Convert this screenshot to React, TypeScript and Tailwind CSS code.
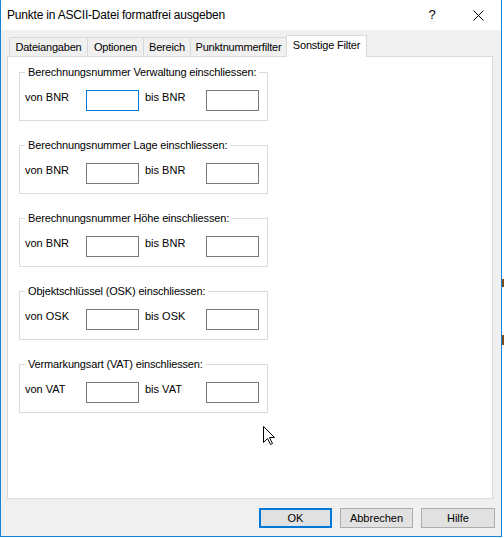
import React from 'react';

const tabs = [
  { label: 'Dateiangaben', width: 'w-[79px]' },
  { label: 'Optionen', width: 'w-[57px]' },
  { label: 'Bereich', width: 'w-[48px]' },
  { label: 'Punktnummerfilter', width: 'w-[97px]' },
];

const groups = [
  { title: 'Berechnungsnummer Verwaltung einschliessen:', from: 'von BNR', to: 'bis BNR', focus: true },
  { title: 'Berechnungsnummer Lage einschliessen:', from: 'von BNR', to: 'bis BNR' },
  { title: 'Berechnungsnummer Höhe einschliessen:', from: 'von BNR', to: 'bis BNR' },
  { title: 'Objektschlüssel (OSK) einschliessen:', from: 'von OSK', to: 'bis OSK' },
  { title: 'Vermarkungsart (VAT) einschliessen:', from: 'von VAT', to: 'bis VAT' },
];

function Field({ focus }: { focus?: boolean }) {
  return (
    <div
      className={`w-[53px] h-[21px] bg-white border ${
        focus ? 'border-[#0078d7]' : 'border-[#7a7a7a]'
      }`}
    />
  );
}

function Group({ title, from, to, focus }: { title: string; from: string; to: string; focus?: boolean }) {
  return (
    <fieldset className="w-[249px] border border-[#dcdcdc] pt-[10px] pb-[9px] pl-[5px]">
      <legend className="px-[3px] leading-[16px] whitespace-nowrap tracking-[-0.15px]">{title}</legend>
      <div className="flex items-start">
        <span className="w-[61px] leading-[14px]">{from}</span>
        <Field focus={focus} />
        <span className="ml-[6px] w-[61px] leading-[14px]">{to}</span>
        <Field />
      </div>
    </fieldset>
  );
}

function Button({ label, primary }: { label: string; primary?: boolean }) {
  return (
    <div
      className={`h-[20px] flex items-center justify-center bg-[#e1e1e1] leading-[16px] ${
        primary ? 'border-2 border-[#0078d7]' : 'border border-[#adadad]'
      } ${label === 'Hilfe' ? 'w-[74px]' : 'w-[73px]'}`}
    >
      {label}
    </div>
  );
}

export default function App() {
  return (
    <div className="relative w-[504px] h-[538px] bg-white flex text-[11px] text-black font-['Liberation_Sans',Arial,sans-serif]">
      <div className="w-[502px] h-[537px] border-l border-r border-b border-[#1883d7] flex flex-col">
        {/* Title bar */}
        <div className="h-[30px] bg-white flex items-center text-[12px] tracking-[-0.2px]">
          <span className="pl-[6px] leading-[16px] flex-1 whitespace-nowrap">Punkte in ASCII-Datei formatfrei ausgeben</span>
          <div className="w-[46px] h-[30px] flex items-center justify-center text-[13px]">?</div>
          <div className="w-[46px] h-[30px] flex items-center justify-center">
            <svg width="11" height="11" viewBox="0 0 11 11">
              <path d="M0.5 0.5 L10.5 10.5 M10.5 0.5 L0.5 10.5" stroke="#000" strokeWidth="1" />
            </svg>
          </div>
        </div>

        {/* Client area */}
        <div className="flex-1 bg-[#f0f0f0] pt-[5px] pl-[6px] flex flex-col">
          <div className="h-[21px] flex items-end pl-[2px] tracking-[-0.2px]">
            {tabs.map((t, i) => (
              <div
                key={t.label}
                className={`${t.width} h-[19px] ${i > 0 ? '-ml-px' : ''} border-l border-t border-r border-[#d9d9d9] bg-[#f0f0f0] text-center pt-[1px] leading-[16px] whitespace-nowrap`}
              >
                {t.label}
              </div>
            ))}
            <div className="relative z-10 -ml-px -mb-px w-[81px] h-[22px] border-l border-t border-r border-[#d9d9d9] bg-white text-center pt-[1px] leading-[16px] whitespace-nowrap">
              Sonstige Filter
            </div>
          </div>

          <div className="w-[486px] h-[443px] border border-[#d9d9d9] bg-white pt-[7px] pl-[11px] flex flex-col gap-[16px]">
            {groups.map((g) => (
              <Group key={g.title} {...g} />
            ))}
          </div>

          <div className="mt-[9px] flex justify-end pr-[6px] gap-[8px]">
            <Button label="OK" primary />
            <Button label="Abbrechen" />
            <Button label="Hilfe" />
          </div>
        </div>
      </div>

      {/* bits of the window behind */}
      <div className="w-[2px] flex flex-col">
        <div className="mt-[279px] h-[8px] bg-[#7a4a1a]" />
        <div className="mt-[48px] h-[10px] bg-[#7a4a1a]" />
      </div>

      {/* mouse pointer */}
      <svg className="absolute left-[263px] top-[426px]" width="13" height="20" viewBox="0 0 13 20">
        <path d="M0.5 0.5 L0.5 16.5 L4.5 12.5 L7.5 18.5 L9.5 17.5 L6.5 11.5 L11.5 11.5 Z" fill="#fff" stroke="#000" strokeWidth="1" strokeLinejoin="miter" />
      </svg>
    </div>
  );
}
